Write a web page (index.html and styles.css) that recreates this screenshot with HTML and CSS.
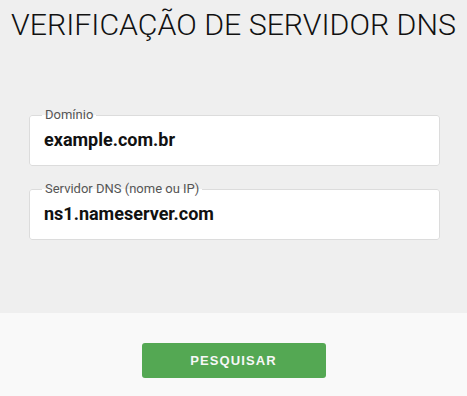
FILE: index.html
```html
<!DOCTYPE html>
<html lang="pt-BR">
<head>
<meta charset="utf-8">
<title>Verificação de Servidor DNS</title>
<link rel="stylesheet" href="styles.css">
</head>
<body>
<main class="panel">
  <h1 class="title">VERIFICAÇÃO DE SERVIDOR DNS</h1>
  <form class="fields">
    <fieldset class="field">
      <legend class="field-label">Domínio</legend>
      <div class="field-value">example.com.br</div>
    </fieldset>
    <fieldset class="field">
      <legend class="field-label">Servidor DNS (nome ou IP)</legend>
      <div class="field-value">ns1.nameserver.com</div>
    </fieldset>
  </form>
</main>
<footer class="actions">
  <button class="btn" type="button">PESQUISAR</button>
</footer>
</body>
</html>
```
FILE: styles.css
```css
* { box-sizing: border-box; }
html, body { margin: 0; padding: 0; }
body {
  width: 467px;
  height: 396px;
  font-family: Roboto, "Liberation Sans", sans-serif;
  background: #f9f9f9;
  overflow: hidden;
}
.panel {
  height: 313px;
  background: #efefef;
  display: flex;
  flex-direction: column;
  padding-top: 7px;
}
.title {
  margin: 0;
  font-size: 30.3px;
  line-height: 36px;
  font-weight: 300;
  color: #111;
  text-align: center;
  letter-spacing: 0;
}
.fields {
  margin: 65px 27px 0 29px;
  display: flex;
  flex-direction: column;
  gap: 16px;
}
.field {
  margin: 0;
  padding: 0 14px 14px;
  border: 1px solid #dcdcdc;
  border-radius: 3px;
  background: #fff;
  min-width: 0;
}
.field-label {
  padding: 0 3px;
  margin-left: -2px;
  font-size: 13px;
  line-height: 14px;
  color: #555;
}
.field-value {
  margin-top: 7px;
  font-size: 18px;
  line-height: 22px;
  font-weight: 700;
  color: #111;
}
.actions {
  height: 83px;
  display: flex;
  justify-content: center;
  padding-top: 30px;
}
.btn {
  width: 184px;
  height: 35px;
  border: 0;
  border-radius: 3px;
  background: #54a853;
  color: #f7f7f7;
  font-family: "Liberation Sans", Arial, sans-serif;
  font-weight: 700;
  font-size: 13px;
  letter-spacing: 1.1px;
  padding: 0;
}
```
